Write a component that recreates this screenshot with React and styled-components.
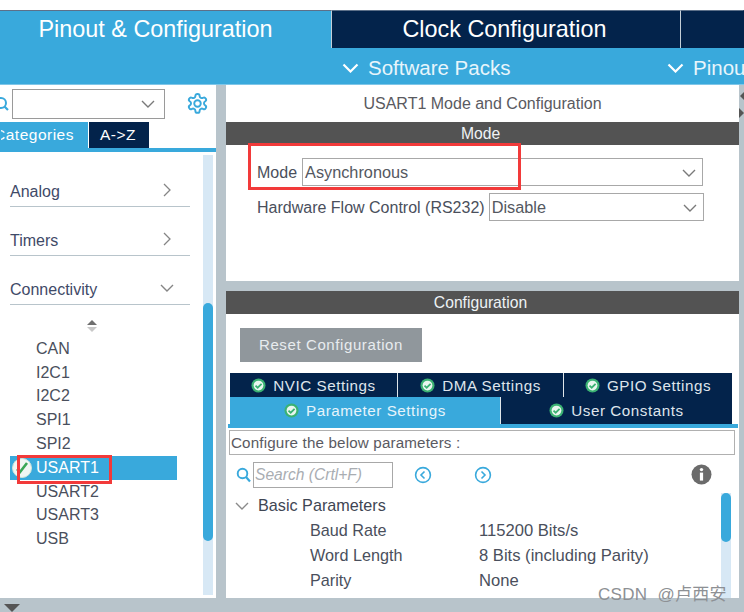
import React from "react";
import styled, { createGlobalStyle } from "styled-components";

const Global = createGlobalStyle`
  html, body { margin: 0; padding: 0; background: #fff; }
  body { width: 744px; height: 612px; overflow: hidden; font-family: "Liberation Sans", Arial, sans-serif; }
  * { box-sizing: border-box; }
`;
const BLUE = "#39a9dc";
const NAVY = "#03234b";
const GREY = "#b8c4cb";
const TEXT = "#4a4f5c";

const Page = styled.div`
  position: relative; width: 744px; height: 612px; padding-top: 10px;
  display: flex; flex-direction: column; background: ${GREY}; overflow: hidden;
  &::before { content: ""; position: absolute; left: 0; right: 0; top: 0; height: 10px; background: #fff; }
`;
const TopTabs = styled.div`display: flex; height: 38px; flex: none; background: ${NAVY};`;
const TopTab = styled.div`
  width: ${p => p.$w}px; height: 38px; flex: none; display: flex; align-items: center; justify-content: center;
  padding-right: ${p => p.$pr || 0}px;
  background: ${p => (p.$active ? BLUE : NAVY)}; color: #fff; font-size: 23.4px;
  border-right: 1px solid ${p => (p.$line ? "#c4ced6" : "transparent")};
  border-top: 1px solid #5d7089;
`;
const SubBar = styled.div`
  height: 37px; flex: none; background: ${BLUE}; color: #e8f5fb; font-size: 20.5px; display: flex; align-items: center;
  padding-left: 342px; padding-top: 3px; border-bottom: 1px solid #7fc6e8; overflow: hidden;
`;
const SubItem = styled.div`
  display: flex; align-items: center; gap: 9px; white-space: nowrap; width: ${p => p.$w}px; flex: none;
  svg { flex: none; }
`;
const Body = styled.div`display: flex; height: 513px; flex: none;`;
const Sidebar = styled.div`
  width: 216px; flex: none; background: #fff; display: flex; flex-direction: column; height: 513px;
`;
const SearchRow = styled.div`display: flex; align-items: center; height: 37px; flex: none;`;
const SearchIcon = styled.svg`width: 10px; height: 18px; flex: none; margin: 0 2px 0 0;`;
const Combo = styled.div`
  width: 153px; height: 30px; flex: none; border: 1px solid #9a9a9a; display: flex; align-items: center; justify-content: flex-end; padding-right: 9px;
`;
const GearIcon = styled.svg`width: 23px; height: 23px; margin-left: 21px; flex: none;`;
const SideTabs = styled.div`display: flex; height: 30px; flex: none; border-bottom: 4px solid ${BLUE};`;
const SideTab = styled.div`
  height: 26px; display: flex; align-items: center; font-size: 15.5px; letter-spacing: 0.5px; width: ${p => p.$w}px; flex: none; overflow: hidden;
  white-space: nowrap; background: ${p => (p.$active ? BLUE : NAVY)}; color: #fff; padding-left: ${p => p.$pl}px;
  justify-content: ${p => (p.$active ? "flex-end" : "flex-start")}; border-left: 1px solid ${p => (p.$active ? BLUE : "#fff")};
`;
const CategoryLabel = styled.span`flex: none; padding-right: 14px;`;
const SideBody = styled.div`flex: 1; display: flex; min-height: 0;`;
const SideList = styled.div`width: 203px; flex: none; padding-left: 10px; display: flex; flex-direction: column;`;
const Group = styled.div`
  width: 180px; height: 49px; flex: none; border-bottom: 1px solid #b8c4cb; display: flex; align-items: flex-end; justify-content: space-between;
  padding: 0 18px 5px 0; color: #3f4a68; font-size: 16px;
  &:first-child { height: 55px; }
`;
const GroupRight = styled.svg`width: 9px; height: 14px; flex: none; margin-bottom: 4px;`;
const GroupOpen = styled.svg`width: 14px; height: 8px; flex: none; margin: 0 -2px 7px 0;`;
const Sorter = styled.svg`width: 12px; height: 14px; flex: none; margin: 14px 0 0 76px;`;
const Items = styled.div`display: flex; flex-direction: column; margin-top: 4px; width: 167px;`;
const Item = styled.div`
  height: 23.8px; flex: none; display: flex; align-items: center; padding-left: 26px; position: relative; font-size: 16px;
  color: ${p => (p.$active ? "#fff" : TEXT)}; background: ${p => (p.$active ? BLUE : "transparent")};
`;
const ItemBadge = styled.svg`position: absolute; left: 1px; top: 1px; width: 22px; height: 22px;`;
const SideTrack = styled.div`width: 10px; flex: none; background: #d7e8f5; position: relative; margin: 3px 0;`;
const Thumb = styled.div`
  position: absolute; left: 0; right: 0; top: ${p => p.$top}px; height: ${p => p.$h}px; background: ${BLUE}; border-radius: 5px;
`;
const Gutter = styled.div`width: 10px; flex: none;`;
const Main = styled.div`width: 513px; flex: none; display: flex; flex-direction: column; gap: 10px;`;
const TopPanel = styled.section`height: 196px; background: #fff; flex: none; display: flex; flex-direction: column;`;
const PanelTitle = styled.div`
  height: 37px; flex: none; display: flex; align-items: center; justify-content: center; font-size: 16px; color: #5a5a5f;
`;
const Bar = styled.div`
  height: 23px; flex: none; background: #535353; color: #eef2f5; font-size: 15.7px; display: flex; align-items: center; justify-content: center; padding-right: 4px;
`;
const FieldRow = styled.div`
  display: flex; align-items: center; height: 28px; margin-top: ${p => p.$mt}px; padding-left: 31px; color: ${TEXT}; font-size: 16px;
`;
const FieldLabel = styled.div`margin-right: ${p => p.$mr}px; padding-top: 2px; white-space: nowrap;`;
const Select = styled.div`
  flex: none; height: 28px; width: ${p => p.$w}px; border: 1px solid #a8a8a8; display: flex; align-items: center; justify-content: space-between; padding: 1px 6px 0 2px; color: #54585f; font-size: 16.3px;
`;
const Chevron = styled.svg`width: 14px; height: 8px; flex: none;`;
const BottomPanel = styled.section`height: 307px; background: #fff; flex: none; display: flex; flex-direction: column; position: relative;`;
const ResetRow = styled.div`padding: 14px 0 0 14px; height: 59px; flex: none;`;
const ResetButton = styled.div`
  width: 182px; height: 34px; padding-bottom: 2px; background: #90979c; color: #e8ecef; font-size: 15px; letter-spacing: 0.6px; display: flex; align-items: center; justify-content: center;
`;
const TabLine = styled.div`display: flex; height: ${p => p.$h}px; margin-left: 4px; flex: none; width: ${p => p.$width}px;`;
const Tab = styled.div`
  width: ${p => p.$w}px; flex: none; height: 100%; display: flex; align-items: center; justify-content: center; gap: 7px;
  background: ${p => (p.$active ? BLUE : NAVY)}; color: ${p => (p.$active ? "#e6f4fb" : "#dfe5ec")}; font-size: 15.2px; letter-spacing: 0.55px;
  border-right: 1px solid #dfe6ea;
  &:last-child { border-right: none; }
`;
const TabRule = styled.div`height: 4px; flex: none; background: ${BLUE}; margin-left: 2px; width: 510px;`;
const Describe = styled.div`
  height: 25px; flex: none; margin: 2px 0 0 3px; width: 506px; border: 1px solid #b0b0b0; display: flex; align-items: center; padding-left: 1px; color: #5a5a62; font-size: 15.2px; letter-spacing: 0.15px; white-space: nowrap;
`;
const Tools = styled.div`display: flex; align-items: center; height: 38px; flex: none; padding: 2px 0 0 10px;`;
const SearchBox = styled.div`
  width: 140px; height: 26px; flex: none; margin-left: 2px; border: 1px solid #a8a8a8; display: flex; align-items: center; padding-left: 1px; font-size: 15.6px; font-style: italic; color: #a9adb2;
`;
const NavIcon = styled.svg`width: 18px; height: 18px; flex: none; margin-left: ${p => p.$ml}px;`;
const InfoIcon = styled.svg`width: 21px; height: 21px; flex: none; margin: -2px 0 0 199px;`;
const Tree = styled.div`flex: 1; display: flex; min-height: 0; position: relative;`;
const TreeBody = styled.div`flex: 1; display: flex; flex-direction: column; font-size: 16.2px; color: ${TEXT};`;
const TreeHead = styled.div`display: flex; align-items: center; height: 25px; padding-left: 9px; gap: 9px; color: #3f4653;`;
const TreeRow = styled.div`display: flex; align-items: center; height: 25px; padding-left: 84px;`;
const Key = styled.div`width: 169px; flex: none;`;
const Value = styled.div`font-size: 16.6px; white-space: nowrap;`;
const TreeTrack = styled.div`position: absolute; right: 8px; top: 0; bottom: 0; width: 10px; background: #d7e8f5;`;
const RedBox = styled.div`
  position: absolute; left: ${p => p.$x}px; top: ${p => p.$y}px; width: ${p => p.$w}px; height: ${p => p.$h}px; border: 3px solid #f23a3a; z-index: 5;
`;
const Watermark = styled.div`
  position: absolute; left: 598px; top: 580px; font-size: 17px; color: #8d9094; white-space: nowrap; z-index: 6;
  word-spacing: 5px; letter-spacing: 0.3px;
  font-family: "Liberation Sans", "Noto Sans CJK SC", sans-serif;
`;
const BottomArrow = styled.svg`position: absolute; left: 3px; top: 604px; width: 18px; height: 8px;`;
const EdgeArrows = styled.svg`position: absolute; left: 739px; top: 92px; width: 5px; height: 30px;`;

const Down = ({ color = "#7a7a7a" }) => (
  <Chevron viewBox="0 0 14 8"><path d="M1 1l6 6 6-6" fill="none" stroke={color} strokeWidth="1.4" /></Chevron>
);
const Check = ({ size = 15 }) => (
  <svg width={size} height={size} viewBox="0 0 16 16" style={{ flex: "none" }}>
    <circle cx="8" cy="8" r="7.5" fill="#3bb273" />
    <circle cx="8" cy="8" r="5.2" fill="#e9f6ef" />
    <path d="M4.8 8.2l2.3 2.2 4.2-4.2" fill="none" stroke="#3bb273" strokeWidth="1.9" />
  </svg>
);
const Right = () => (
  <GroupRight viewBox="0 0 9 14"><path d="M1 1l6 6-6 6" fill="none" stroke="#858585" strokeWidth="1.3" /></GroupRight>
);

export default function App() {
  return (
    <Page>
      <Global />
      <TopTabs>
        <TopTab $w={332} $active $line $pr={20}>Pinout &amp; Configuration</TopTab>
        <TopTab $w={349} $line $pr={3}>Clock Configuration</TopTab>
        <TopTab $w={63} />
      </TopTabs>
      <SubBar>
        <SubItem $w={325}>
          <svg width="17" height="10" viewBox="0 0 17 10"><path d="M1.5 1.5l7 7 7-7" fill="none" stroke="#fff" strokeWidth="2.2" /></svg>
          Software Packs
        </SubItem>
        <SubItem $w={80}>
          <svg width="17" height="10" viewBox="0 0 17 10"><path d="M1.5 1.5l7 7 7-7" fill="none" stroke="#fff" strokeWidth="2.2" /></svg>
          Pinout
        </SubItem>
      </SubBar>
      <Body>
        <Sidebar>
          <SearchRow>
            <SearchIcon viewBox="0 0 10 18"><circle cx="1" cy="8" r="5" fill="none" stroke={BLUE} strokeWidth="2" /><path d="M4.5 11.5L8 15" stroke={BLUE} strokeWidth="2.2" /></SearchIcon>
            <Combo><Down /></Combo>
            <GearIcon viewBox="0 0 24 24" fill="none" stroke={BLUE} strokeWidth="2">
              <circle cx="12" cy="12" r="3.4" />
              <path d="M12.2 2h-.4a2 2 0 0 0-2 2v.2a2 2 0 0 1-1 1.7l-.4.2a2 2 0 0 1-2 0l-.2-.1a2 2 0 0 0-2.7.7l-.2.4a2 2 0 0 0 .7 2.7l.2.1a2 2 0 0 1 1 1.7v.5a2 2 0 0 1-1 1.7l-.2.1a2 2 0 0 0-.7 2.7l.2.4a2 2 0 0 0 2.7.7l.2-.1a2 2 0 0 1 2 0l.4.2a2 2 0 0 1 1 1.7v.2a2 2 0 0 0 2 2h.4a2 2 0 0 0 2-2v-.2a2 2 0 0 1 1-1.7l.4-.2a2 2 0 0 1 2 0l.2.1a2 2 0 0 0 2.7-.7l.2-.4a2 2 0 0 0-.7-2.7l-.2-.1a2 2 0 0 1-1-1.7v-.5a2 2 0 0 1 1-1.7l.2-.1a2 2 0 0 0 .7-2.7l-.2-.4a2 2 0 0 0-2.7-.7l-.2.1a2 2 0 0 1-2 0l-.4-.2a2 2 0 0 1-1-1.7V4a2 2 0 0 0-2-2z" />
            </GearIcon>
          </SearchRow>
          <SideTabs>
            <SideTab $w={88} $active $pl={0}><CategoryLabel>Categories</CategoryLabel></SideTab>
            <SideTab $w={61} $pl={11}>A-&gt;Z</SideTab>
          </SideTabs>
          <SideBody>
            <SideList>
              <Group>Analog <Right /></Group>
              <Group>Timers <Right /></Group>
              <Group>Connectivity
                <GroupOpen viewBox="0 0 14 8"><path d="M1 1l6 6 6-6" fill="none" stroke="#858585" strokeWidth="1.4" /></GroupOpen>
              </Group>
              <Sorter viewBox="0 0 12 14">
                <path d="M6 1l5 5H1z" fill="#6f6f6f" /><path d="M1 8h10l-5 5z" fill="#c8c8c8" />
              </Sorter>
              <Items>
                <Item>CAN</Item>
                <Item>I2C1</Item>
                <Item>I2C2</Item>
                <Item>SPI1</Item>
                <Item>SPI2</Item>
                <Item $active>
                  <ItemBadge viewBox="0 0 22 22">
                    <circle cx="11" cy="11" r="9.5" fill="#f1f6f3" stroke="#cfe3d8" />
                    <path d="M6 12l3 3 7-9" fill="none" stroke="#3aa655" strokeWidth="2.6" />
                  </ItemBadge>
                  USART1
                </Item>
                <Item>USART2</Item>
                <Item>USART3</Item>
                <Item>USB</Item>
              </Items>
            </SideList>
            <SideTrack><Thumb $top={148} $h={238} /></SideTrack>
          </SideBody>
        </Sidebar>
        <Gutter />
        <Main>
          <TopPanel>
            <PanelTitle>USART1 Mode and Configuration</PanelTitle>
            <Bar>Mode</Bar>
            <FieldRow $mt={13}>
              <FieldLabel $mr={5}>Mode</FieldLabel>
              <Select $w={401}>Asynchronous <Down /></Select>
            </FieldRow>
            <FieldRow $mt={7}>
              <FieldLabel $mr={4}>Hardware Flow Control (RS232)</FieldLabel>
              <Select $w={215}>Disable <Down /></Select>
            </FieldRow>
          </TopPanel>
          <BottomPanel>
            <Bar>Configuration</Bar>
            <ResetRow><ResetButton>Reset Configuration</ResetButton></ResetRow>
            <TabLine $h={24} $width={502}>
              <Tab $w={168}><Check />NVIC Settings</Tab>
              <Tab $w={166}><Check />DMA Settings</Tab>
              <Tab $w={168}><Check />GPIO Settings</Tab>
            </TabLine>
            <TabLine $h={27} $width={502}>
              <Tab $w={271} $active><Check />Parameter Settings</Tab>
              <Tab $w={231}><Check />User Constants</Tab>
            </TabLine>
            <TabRule />
            <Describe>Configure the below parameters :</Describe>
            <Tools>
              <svg width="15" height="16" viewBox="0 0 15 16" style={{ flex: "none" }}><circle cx="6.5" cy="6.5" r="4.8" fill="none" stroke={BLUE} strokeWidth="1.9" /><path d="M10 10l4 4.5" stroke={BLUE} strokeWidth="2.2" /></svg>
              <SearchBox>Search (Crtl+F)</SearchBox>
              <NavIcon $ml={21} viewBox="0 0 18 18"><circle cx="9" cy="9" r="7.4" fill="none" stroke={BLUE} strokeWidth="1.6" /><path d="M10.5 5.5L7 9l3.5 3.5" fill="none" stroke={BLUE} strokeWidth="1.6" /></NavIcon>
              <NavIcon $ml={42} viewBox="0 0 18 18"><circle cx="9" cy="9" r="7.4" fill="none" stroke={BLUE} strokeWidth="1.6" /><path d="M7.5 5.5L11 9l-3.5 3.5" fill="none" stroke={BLUE} strokeWidth="1.6" /></NavIcon>
              <InfoIcon viewBox="0 0 21 21"><circle cx="10.5" cy="10.5" r="10" fill="#6b6b6b" /><circle cx="10.5" cy="5.6" r="1.7" fill="#fff" /><rect x="8.9" y="8.6" width="3.2" height="8" fill="#fff" /></InfoIcon>
            </Tools>
            <Tree>
              <TreeBody>
                <TreeHead>
                  <Down color="#8a8a8a" />
                  Basic Parameters
                </TreeHead>
                <TreeRow><Key>Baud Rate</Key><Value>115200 Bits/s</Value></TreeRow>
                <TreeRow><Key>Word Length</Key><Value>8 Bits (including Parity)</Value></TreeRow>
                <TreeRow><Key>Parity</Key><Value>None</Value></TreeRow>
              </TreeBody>
              <TreeTrack><Thumb $top={0} $h={49} /></TreeTrack>
            </Tree>
          </BottomPanel>
        </Main>
      </Body>
      <RedBox $x={248} $y={143} $w={273} $h={47} />
      <RedBox $x={17} $y={455} $w={95} $h={29} />
      <Watermark>CSDN @卢西安</Watermark>
      <BottomArrow viewBox="0 0 18 8"><path d="M1 0h16l-8 8z" fill="#555" /></BottomArrow>
      <EdgeArrows viewBox="0 0 5 30"><path d="M5 0L1 4l4 4z" fill="#555" /><path d="M0 16l5 5-5 5z" fill="#555" /></EdgeArrows>
    </Page>
  );
}
